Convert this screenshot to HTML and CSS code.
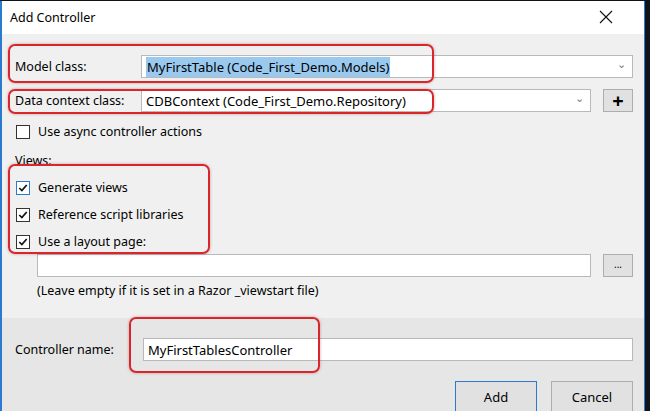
FILE: index.html
```html
<!DOCTYPE html>
<html lang="en">
<head>
    <meta charset="UTF-8">
    <title>Add Controller</title>
    <link rel="stylesheet" href="styles.css">
</head>
<body>
    <div class="window">
        <div class="titlebar">
            <span class="title">Add Controller</span>
            <svg class="close" width="14" height="14" viewBox="0 0 14 14">
                <path d="M1 1 L13 13 M13 1 L1 13" stroke="#111" stroke-width="1.1" fill="none"/>
            </svg>
        </div>

        <div class="content">
            <div class="row row-model">
                <span class="mark mark-model"></span>
                <label class="label">Model class:</label>
                <div class="combo">
                    <span class="combo-text"><span class="selected">MyFirstTable (Code_First_Demo.Models)</span></span>
                    <span class="chevron">&#8964;</span>
                </div>
            </div>

            <div class="row row-context">
                <span class="mark mark-context"></span>
                <label class="label">Data context class:</label>
                <div class="combo">
                    <span class="combo-text">CDBContext (Code_First_Demo.Repository)</span>
                    <span class="chevron">&#8964;</span>
                </div>
                <button class="side-btn plus">+</button>
            </div>

            <div class="check-row async">
                <span class="box"></span>
                <span>Use async controller actions</span>
            </div>

            <div class="views-label">Views:</div>

            <div class="views">
                <span class="mark mark-views"></span>
                <div class="check-row">
                    <span class="box checked focus">
                        <svg viewBox="0 0 13 13"><path d="M2.5 6.5 L5.3 9.3 L10.5 3.2" stroke="#111" stroke-width="1.8" fill="none"/></svg>
                    </span>
                    <span>Generate views</span>
                </div>
                <div class="check-row">
                    <span class="box checked">
                        <svg viewBox="0 0 13 13"><path d="M2.5 6.5 L5.3 9.3 L10.5 3.2" stroke="#111" stroke-width="1.8" fill="none"/></svg>
                    </span>
                    <span>Reference script libraries</span>
                </div>
                <div class="check-row">
                    <span class="box checked">
                        <svg viewBox="0 0 13 13"><path d="M2.5 6.5 L5.3 9.3 L10.5 3.2" stroke="#111" stroke-width="1.8" fill="none"/></svg>
                    </span>
                    <span>Use a layout page:</span>
                </div>
            </div>

            <div class="layout-row">
                <div class="textbox"></div>
                <button class="side-btn dots">...</button>
            </div>
            <div class="note">(Leave empty if it is set in a Razor _viewstart file)</div>
        </div>

        <div class="footer">
            <div class="row row-name">
                <label class="label">Controller name:</label>
                <div class="textbox name-box">
                    <span class="mark mark-name"></span>
                    MyFirstTablesController
                </div>
            </div>
            <div class="buttons">
                <button class="btn default">Add</button>
                <button class="btn">Cancel</button>
            </div>
        </div>
    </div>
</body>
</html>
```

FILE: styles.css
```css
* {
    margin: 0;
    padding: 0;
    box-sizing: border-box;
}

body {
    background: #101418;
    font-family: "Noto Sans", "Open Sans", sans-serif;
    font-size: 12px;
    color: #000;
    height: 411px;
    overflow: hidden;
}

.window {
    width: 645px;
    height: 430px;
    margin-top: 1px;
    background: #f0f0f0;
    border-left: 2px solid #2a7ad0;
    border-right: 1px solid #2a7ad0;
    display: flex;
    flex-direction: column;
}

.titlebar {
    height: 33px;
    background: #fff;
    display: flex;
    align-items: center;
    justify-content: space-between;
    padding: 0 31px 1px 8px;
}

.title {
    font-size: 12.5px;
}

.close {
    margin-top: -1px;
}

.content {
    padding: 0 11px 0 13px;
    height: 284px;
}

.row {
    position: relative;
    display: flex;
    align-items: center;
    height: 23px;
}

.row-model {
    margin-top: 21px;
}

.row-context {
    margin-top: 11px;
}

.label {
    width: 126px;
    font-size: 12.5px;
}

.combo {
    flex: 1;
    height: 23px;
    background: #fff;
    border: 1px solid #b9b9b9;
    display: flex;
    align-items: center;
    justify-content: space-between;
    padding: 0 6px 0 4px;
    font-size: 13px;
}

.selected {
    background: #99c9ef;
    padding: 1px 1px;
}

.chevron {
    color: #7a7a7a;
    font-size: 11px;
    margin-top: -6px;
}

.side-btn {
    width: 30px;
    height: 23px;
    margin-left: 12px;
    background: #e1e1e1;
    border: 1px solid #adadad;
    font-family: inherit;
    color: #000;
}

.plus {
    font-size: 20px;
    font-weight: bold;
    line-height: 18px;
}

.dots {
    font-size: 10px;
    line-height: 12px;
    padding-bottom: 4px;
}

.check-row {
    display: flex;
    align-items: center;
    gap: 8px;
    height: 27px;
    padding-left: 1px;
    font-size: 12.5px;
}

.async {
    margin-top: 6px;
}

.box {
    width: 14px;
    height: 14px;
    border: 1px solid #333;
    background: #fff;
    display: flex;
}

.box svg {
    width: 12px;
    height: 12px;
}

.box.focus {
    border-color: #2a7ad0;
}

.views-label {
    margin-top: 7px;
    font-size: 12.5px;
}

.views {
    position: relative;
    margin-top: 5px;
}

.layout-row {
    display: flex;
    align-items: center;
    margin-top: -1px;
    padding-left: 22px;
}

.textbox {
    flex: 1;
    height: 23px;
    background: #fff;
    border: 1px solid #b9b9b9;
    display: flex;
    align-items: center;
    padding-left: 4px;
    font-size: 13px;
}

.note {
    padding-left: 22px;
    margin-top: 5px;
    font-size: 12.5px;
}

.footer {
    flex: 1;
    background: #e6e6e6;
    padding: 20px 11px 0 13px;
}

.name-box {
    position: relative;
    margin-left: 2px;
}

.buttons {
    display: flex;
    justify-content: flex-end;
    gap: 14px;
    margin-top: 20px;
}

.btn {
    width: 82px;
    height: 32px;
    background: #e1e1e1;
    border: 1px solid #adadad;
    font-family: inherit;
    font-size: 13px;
    color: #000;
}

.btn.default {
    border-color: #2a7ad0;
}

/* red annotation frames drawn over the dialog */
.mark {
    position: absolute;
    border: 2px solid #d9252c;
    border-radius: 7px;
    box-shadow: 0 0 3px rgba(120, 0, 0, 0.35);
    pointer-events: none;
}

.mark-model {
    left: -7px;
    top: -11px;
    width: 426px;
    height: 39px;
}

.mark-context {
    left: -7px;
    top: 0;
    width: 426px;
    height: 25px;
}

.mark-views {
    left: -7px;
    top: -10px;
    width: 202px;
    height: 90px;
}

.mark-name {
    left: -15px;
    top: -22px;
    width: 191px;
    height: 56px;
}
```
